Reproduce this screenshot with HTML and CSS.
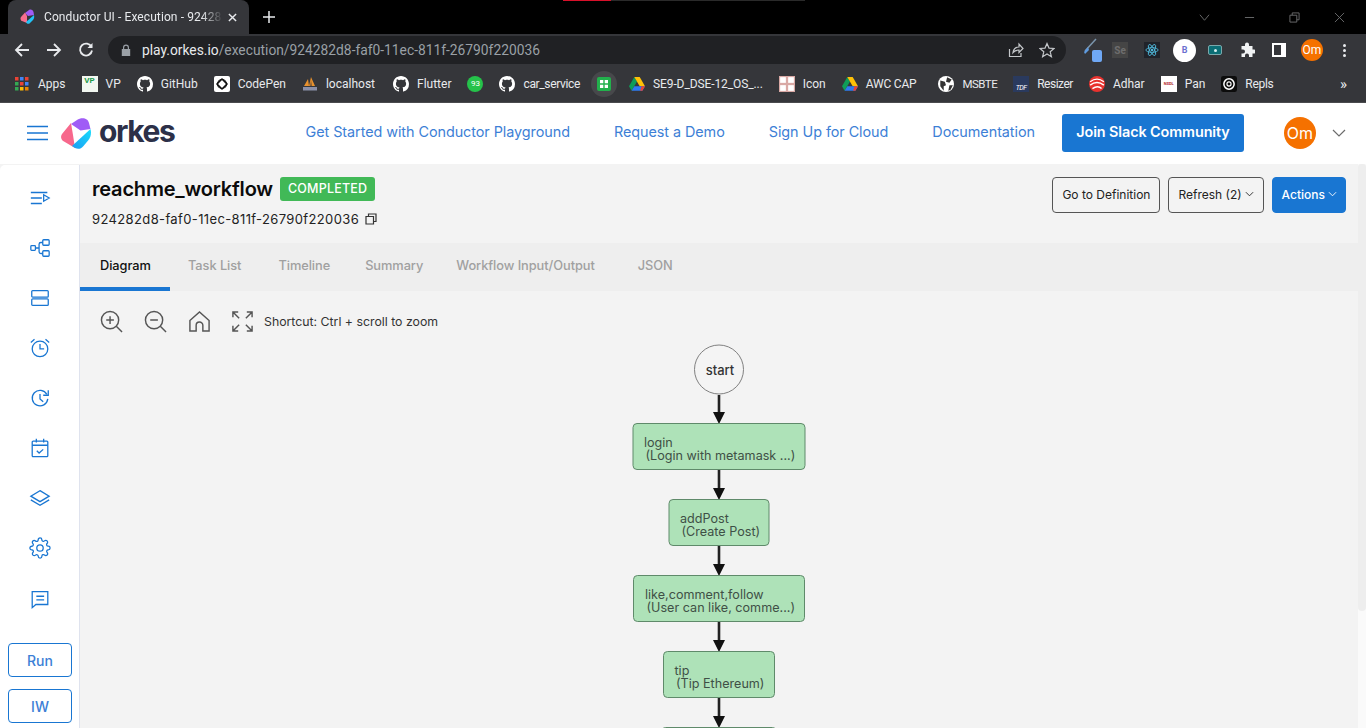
FILE: index.html
```html
<!DOCTYPE html>
<html lang="en">
<head>
	<meta charset="utf-8" />
	<title>Conductor UI - Execution</title>
	<link rel="stylesheet" href="styles.css">
</head>
<body>
	<svg class="sprite" width="0" height="0">
		<symbol id="gh" viewBox="0 0 16 16"><path fill="#fff" d="M8 0C3.58 0 0 3.58 0 8c0 3.54 2.29 6.53 5.47 7.59.4.07.55-.17.55-.38 0-.19-.01-.82-.01-1.49-2.01.37-2.53-.49-2.69-.94-.09-.23-.48-.94-.82-1.13-.28-.15-.68-.52-.01-.53.63-.01 1.08.58 1.23.82.72 1.21 1.87.87 2.33.66.07-.52.28-.87.51-1.07-1.78-.2-3.64-.89-3.64-3.95 0-.87.31-1.59.82-2.15-.08-.2-.36-1.02.08-2.12 0 0 .67-.21 2.2.82.64-.18 1.32-.27 2-.27.68 0 1.36.09 2 .27 1.53-1.04 2.2-.82 2.2-.82.44 1.1.16 1.92.08 2.12.51.56.82 1.27.82 2.15 0 3.07-1.87 3.75-3.65 3.95.29.25.54.73.54 1.48 0 1.07-.01 1.93-.01 2.2 0 .21.15.46.55.38A8.013 8.013 0 0016 8c0-4.42-3.58-8-8-8z"/></symbol>
		<symbol id="drive" viewBox="0 0 16 16"><path fill="#0f9d58" d="M5.3 1 0 10.2l2.6 4.5L8 5.5z"/><path fill="#ffc107" d="M5.3 1h5.4L16 10.2h-5.3z"/><path fill="#2f7bf0" d="M2.6 14.7h10.8l2.6-4.5H5.3z"/><path fill="#ea4335" d="M13.4 14.7 16 10.2h-3.6l-1.2 4.5z"/></symbol>
	</svg>

	<div class="tabstrip">
		<div class="top-glow"></div>
		<div class="tab">
			<svg class="tab-fav" viewBox="0 0 16 16"><path fill="#a25cf5" d="M5 4 9 1c2-1 4 0 4.500 2L14 6 8 7z"/><path fill="#f66e8e" d="M5 3.500 1 8c-1 1.500-.5 3 1 4l5 2V7z"/><path fill="#22c4f7" d="M14 6c.5 2 0 4-1 5l-3 3c-1 1-2 1-3 .5L6 13z"/></svg>
			<span class="tab-title">Conductor UI - Execution - 92428</span>
			<svg class="tab-x" viewBox="0 0 10 10"><path d="M1 1l8 8M9 1l-8 8"/></svg>
		</div>
		<svg class="new-tab" viewBox="0 0 12 12"><path d="M6 0v12M0 6h12"/></svg>
		<div class="win-ctrls">
			<svg class="win-ic" viewBox="0 0 12 12"><path d="M1 3l5 6 5-6"/></svg>
			<svg class="win-ic" viewBox="0 0 12 12"><path d="M1 6h10"/></svg>
			<svg class="win-ic" viewBox="0 0 12 12"><path d="M1 3.500h7.500V11H1zM3.500 3.500V1H11v7.500H8.500"/></svg>
			<svg class="win-ic" viewBox="0 0 12 12"><path d="M1 1l10 10M11 1L1 11"/></svg>
		</div>
	</div>

	<div class="toolbar">
		<svg class="nav-ic" viewBox="0 0 16 16"><path d="M15 8H2M8 2 2 8l6 6"/></svg>
		<svg class="nav-ic" viewBox="0 0 16 16"><path d="M1 8h13M8 2l6 6-6 6"/></svg>
		<svg class="nav-ic" viewBox="0 0 16 16"><path d="M13.500 5A6 6 0 1 0 14 8.500"/><path class="solid" d="M14.500 1v5h-5z"/></svg>
		<div class="omnibox">
			<svg class="lock" viewBox="0 0 10 12"><path d="M2 5V3.500a3 3 0 0 1 6 0V5h1.200v7H.8V5zM3.200 5h3.600V3.500a1.800 1.800 0 0 0-3.600 0z"/></svg>
			<span class="url"><span class="url-host">play.orkes.io</span>/execution/924282d8-faf0-11ec-811f-26790f220036</span>
			<svg class="omni-ic" viewBox="0 0 16 16"><path d="M1.500 7v7.500H13V11M5 10.500C5.500 7 8 5 11 5V2l4 4.500L11 10.500V8C8.500 8 6.500 8.800 5 10.500z"/></svg>
			<svg class="omni-ic" viewBox="0 0 16 16"><path d="M8 1.500l2 4.600 5 .4-3.800 3.300 1.200 4.900L8 12l-4.400 2.700 1.200-4.900L1 6.500l5-.4z"/></svg>
		</div>
		<div class="ext-row">
			<div class="ext ext-pen">
				<svg viewBox="0 0 20 20"><path d="M15 1 4 13" class="pen-a"/><path d="M7 9 3 14l1 2 4-4z" class="pen-b"/></svg>
				<span class="pen-badge"></span>
			</div>
			<span class="ext ext-se">Se</span>
			<div class="ext ext-react">
				<svg viewBox="0 0 16 16"><g fill="none" stroke="#4fb9dc"><ellipse cx="8" cy="8" rx="7" ry="2.700"/><ellipse cx="8" cy="8" rx="7" ry="2.700" transform="rotate(60 8 8)"/><ellipse cx="8" cy="8" rx="7" ry="2.700" transform="rotate(120 8 8)"/></g><circle cx="8" cy="8" r="1.400" fill="#4fb9dc"/></svg>
			</div>
			<span class="ext ext-b">B</span>
			<div class="ext ext-cash"><span></span></div>
			<svg class="ext ext-puzzle" viewBox="0 0 16 16"><path d="M6 2.500a2 2 0 0 1 4 0V4h3.500v3.500H15a2 2 0 0 1 0 4h-1.500V15h-3.500v-1.500a2 2 0 0 0-4 0V15H2.500v-3.500H4a2 2 0 0 0 0-4H2.500V4H6z"/></svg>
			<div class="ext ext-panel"></div>
			<span class="ext ext-om">Om</span>
			<div class="ext ext-dots"><i></i><i></i><i></i></div>
		</div>
	</div>

	<div class="bookmarks">
		<a class="bm bm-apps">
			<svg class="bm-ic" viewBox="0 0 14 14"><rect width="3.500" height="3.500" fill="#ea4335"/><rect x="5" width="3.500" height="3.500" fill="#4285f4"/><rect x="10" width="3.500" height="3.500" fill="#ea4335"/><rect y="5" width="3.500" height="3.500" fill="#34a853"/><rect x="5" y="5" width="3.500" height="3.500" fill="#ea4335"/><rect x="10" y="5" width="3.500" height="3.500" fill="#4285f4"/><rect y="10" width="3.500" height="3.500" fill="#34a853"/><rect x="5" y="10" width="3.500" height="3.500" fill="#fbbc05"/><rect x="10" y="10" width="3.500" height="3.500" fill="#ea8600"/></svg>Apps</a>
		<a class="bm"><span class="bm-ic fav-vp">VP</span>VP</a>
		<a class="bm"><svg class="bm-ic"><use href="#gh"/></svg>GitHub</a>
		<a class="bm"><svg class="bm-ic fav-cp" viewBox="0 0 16 16"><rect width="16" height="16" rx="2" fill="#fff"/><path d="M8 3l5 5-5 5-5-5z" fill="none" stroke="#111" stroke-width="1.500"/><circle cx="8" cy="8" r="4.500" fill="none" stroke="#111" stroke-width="1.200"/></svg>CodePen</a>
		<a class="bm bm-local"><svg class="bm-ic" viewBox="0 0 16 16"><path fill="#e8912d" d="M2 10 6 3l1 7zM7 10l2-9 4 9z"/><path fill="#7a5a3a" d="M8 10l1-6 1 6z"/><rect x="1" y="11" width="14" height="3.500" fill="#8a8fa8"/></svg>localhost</a>
		<a class="bm"><svg class="bm-ic"><use href="#gh"/></svg>Flutter</a>
		<a class="bm"><span class="bm-ic fav-wa">93</span></a>
		<a class="bm bm-car"><svg class="bm-ic"><use href="#gh"/></svg>car_service</a>
		<a class="bm bm-pill"><svg class="pill-ic" viewBox="0 0 14 14"><rect width="14" height="14" rx="2" fill="#22b14c"/><path d="M3 3h3.300v3.300H3zM7.700 3H11v3.300H7.700zM3 7.700h3.300V11H3zM7.700 7.700H11V11H7.700z" fill="#fff"/></svg></a>
		<a class="bm bm-se9"><svg class="bm-ic"><use href="#drive"/></svg>SE9-D_DSE-12_OS_...</a>
		<a class="bm"><svg class="bm-ic" viewBox="0 0 14 14"><rect width="14" height="14" fill="#d9a9a5"/><rect x="1" y="1" width="5" height="5" fill="#fff"/><rect x="8" y="1" width="5" height="5" fill="#fff"/><rect x="1" y="8" width="5" height="5" fill="#fff"/><rect x="8" y="8" width="5" height="5" fill="#fff"/></svg>Icon</a>
		<a class="bm bm-awc"><svg class="bm-ic"><use href="#drive"/></svg>AWC CAP</a>
		<a class="bm bm-msbte"><svg class="bm-ic" viewBox="0 0 14 14"><circle cx="7" cy="7" r="7" fill="#fff"/><path d="M2 4l4 1 1 3-2 1v4L2 9zM8 1l4 2-2 3-3-1zM10 8h3l-2 4-2 1z" fill="#333"/></svg>MSBTE</a>
		<a class="bm bm-resizer"><span class="bm-ic fav-tdf">TDF</span>Resizer</a>
		<a class="bm bm-adhar"><svg class="bm-ic" viewBox="0 0 14 14"><circle cx="7" cy="7" r="7" fill="#e8322e"/><path d="M1 5c4-3 8-3 12 0M1 8c4-3 8-3 12 0M3 11c3-2 6-2 8 0" fill="none" stroke="#fff" stroke-width="1.200"/></svg>Adhar</a>
		<a class="bm"><span class="bm-ic fav-nsdl">NSDL</span>Pan</a>
		<a class="bm bm-repls"><svg class="bm-ic" viewBox="0 0 14 14"><rect width="14" height="14" rx="2" fill="#0c0c0c"/><circle cx="7" cy="7" r="4.500" fill="none" stroke="#fff" stroke-width="1.300"/><circle cx="7" cy="7" r="1.800" fill="none" stroke="#fff"/></svg>Repls</a>
		<span class="bm-more">»</span>
	</div>

	<header class="site-head">
		<svg class="burger" viewBox="0 0 21 16"><path d="M0 1.500h21M0 8h21M0 14.500h21"/></svg>
		<div class="brand">
			<svg class="brand-mark" viewBox="0 0 30 31">
				<defs><linearGradient id="cy" x1="0" y1="1" x2="1" y2="0"><stop offset="0" stop-color="#1c9cf2"/><stop offset="1" stop-color="#18dcfc"/></linearGradient></defs>
				<path fill="#f7688c" d="M10 5 1 16c-1.800 2.500-1 6 2 7.500L14 30l-2-13z"/>
				<path fill="#a05cf6" d="M10 6 16 2c4-3 11-2.500 12 3l1.500 6-10 1.500z"/>
				<path fill="url(#cy)" d="M29.500 11c1 4 .5 8-2 11l-5 6c-2.500 3-5.500 3.500-8.500 2l-3-2z"/>
			</svg>
			<span class="brand-name">orkes</span>
		</div>
		<nav class="head-nav">
			<a>Get Started with Conductor Playground</a>
			<a>Request a Demo</a>
			<a>Sign Up for Cloud</a>
			<a>Documentation</a>
		</nav>
		<a class="slack-btn">Join Slack Community</a>
		<span class="user-om">Om</span>
		<svg class="user-chev" viewBox="0 0 14 8"><path d="M1 1l6 6 6-6"/></svg>
	</header>

	<div class="app">
		<aside class="sidebar">
			<svg class="side-ic" viewBox="0 0 24 24"><path d="M2 6h18M2 12h12M2 18h12M16 8.500l6 3.500-6 3.500z"/></svg>
			<svg class="side-ic" viewBox="0 0 24 24"><rect x="2" y="9.500" width="5" height="5" rx=".8"/><rect x="15" y="3" width="7" height="6" rx="1"/><rect x="15" y="15" width="7" height="6" rx="1"/><path d="M7 12h4M15 6h-2a2 2 0 0 0-2 2v8a2 2 0 0 0 2 2h2"/></svg>
			<svg class="side-ic" viewBox="0 0 24 24"><rect x="3" y="4" width="18" height="7" rx="1"/><rect x="3" y="13" width="18" height="7" rx="1"/></svg>
			<svg class="side-ic" viewBox="0 0 24 24"><circle cx="12" cy="13" r="8.500"/><path d="M12 7.500V13h4.500M2 6l4-3.500M22 6l-4-3.500"/></svg>
			<svg class="side-ic" viewBox="0 0 24 24"><path d="M19.500 8A8.500 8.500 0 1 0 20.500 13"/><path d="M21 3.500V9h-5.500M12 7.500V13l3.500 3"/></svg>
			<svg class="side-ic" viewBox="0 0 24 24"><rect x="3.500" y="4.500" width="17" height="17" rx="1"/><path d="M3.500 9h17M8 2v4M16 2v4M8.500 15l2.500 2.500 4.500-4"/></svg>
			<svg class="side-ic" viewBox="0 0 24 24"><path d="M12 4 22 10l-10 6L2 10zM2 14l10 6 10-6"/></svg>
			<svg class="side-ic" viewBox="0 0 24 24"><circle cx="12" cy="12" r="3.500"/><path d="M19.400 15a1.650 1.650 0 0 0 .33 1.820l.06.06a2 2 0 0 1 0 2.830 2 2 0 0 1-2.830 0l-.06-.06a1.650 1.650 0 0 0-1.820-.33 1.650 1.650 0 0 0-1 1.510V21a2 2 0 0 1-2 2 2 2 0 0 1-2-2v-.09A1.650 1.650 0 0 0 9 19.400a1.650 1.650 0 0 0-1.820.33l-.06.06a2 2 0 0 1-2.830 0 2 2 0 0 1 0-2.830l.06-.06a1.650 1.650 0 0 0 .33-1.820 1.650 1.650 0 0 0-1.510-1H3a2 2 0 0 1-2-2 2 2 0 0 1 2-2h.09A1.650 1.650 0 0 0 4.600 9a1.650 1.650 0 0 0-.33-1.820l-.06-.06a2 2 0 0 1 0-2.830 2 2 0 0 1 2.830 0l.06.06a1.650 1.650 0 0 0 1.820.33H9a1.650 1.650 0 0 0 1-1.510V3a2 2 0 0 1 2-2 2 2 0 0 1 2 2v.09a1.650 1.650 0 0 0 1 1.510 1.650 1.650 0 0 0 1.820-.33l.06-.06a2 2 0 0 1 2.830 0 2 2 0 0 1 0 2.830l-.06.06a1.650 1.650 0 0 0-.33 1.820V9a1.650 1.650 0 0 0 1.510 1H21a2 2 0 0 1 2 2 2 2 0 0 1-2 2h-.09a1.650 1.650 0 0 0-1.510 1z"/></svg>
			<svg class="side-ic side-ic-msg" viewBox="0 0 24 24"><path d="M3.500 4h17v14H7.500l-4 3.500zM8 9h8.500M8 13h8.500"/></svg>
			<a class="side-btn side-btn-first">Run</a>
			<a class="side-btn">IW</a>
		</aside>

		<main class="panel">
			<div class="exec-head">
				<div class="exec-info">
					<div class="exec-title">
						<h1>reachme_workflow</h1>
						<span class="badge">COMPLETED</span>
					</div>
					<div class="exec-id">
						<span>924282d8-faf0-11ec-811f-26790f220036</span>
						<svg class="copy-ic" viewBox="0 0 12 12"><path d="M1 3.500h7.500V11H1zM3.500 3.500V1H11v7.500H8.500"/></svg>
					</div>
				</div>
				<div class="exec-actions">
					<a class="btn">Go to Definition</a>
					<a class="btn">Refresh (2)<svg class="caret" viewBox="0 0 10 6"><path d="M1 1l4 4 4-4"/></svg></a>
					<a class="btn btn-blue">Actions<svg class="caret" viewBox="0 0 10 6"><path d="M1 1l4 4 4-4"/></svg></a>
				</div>
			</div>

			<div class="tabs">
				<a class="tab-link tab-active">Diagram</a>
				<a class="tab-link tab-task">Task List</a>
				<a class="tab-link">Timeline</a>
				<a class="tab-link tab-summary">Summary</a>
				<a class="tab-link tab-wf">Workflow Input/Output</a>
				<a class="tab-link tab-json">JSON</a>
			</div>

			<div class="diagram">
				<div class="zoom-bar">
					<svg class="zoom-ic" viewBox="0 0 24 24"><circle cx="10.500" cy="10.500" r="9"/><path d="M17 17l6 6M10.500 6.500v8M6.500 10.500h8"/></svg>
					<svg class="zoom-ic" viewBox="0 0 24 24"><circle cx="10.500" cy="10.500" r="9"/><path d="M17 17l6 6M6.500 10.500h8"/></svg>
					<svg class="zoom-ic" viewBox="0 0 24 24"><path d="M2 11 12 2l10 9v11h-6.500v-6a3.500 3.500 0 0 0-7 0v6H2z"/></svg>
					<svg class="zoom-ic" viewBox="0 0 24 24"><path d="M8.500 8.500 2 2M2 7.500V2h5.500M15.500 8.500 22 2M16.500 2H22v5.500M8.500 15.500 2 22M2 16.500V22h5.500M15.500 15.500 22 22M22 16.500V22h-5.500"/></svg>
					<span class="zoom-hint">Shortcut: Ctrl + scroll to zoom</span>
				</div>
				<svg class="graph" viewBox="80 340 1278 388" width="1278" height="388">
					<g class="edge">
						<path d="M719 395v18M719 470v19M719 546v19M719 622v19M719 698v19"/>
					</g>
					<g class="head">
						<path d="M713 412h12l-6 12zM713 488h12l-6 12zM713 564h12l-6 12zM713 640h12l-6 12zM713 716h12l-6 12z"/>
					</g>
					<circle class="node-start" cx="719" cy="369.500" r="24.500"/>
					<text class="node-start-t" x="720" y="375">start</text>
					<rect class="node" x="633" y="423.500" width="172" height="46" rx="4"/>
					<text class="node-t" x="644" y="447">login</text>
					<text class="node-t" x="645.500" y="460">(Login with metamask ...)</text>
					<rect class="node" x="669" y="499.500" width="100" height="46" rx="4"/>
					<text class="node-t" x="680" y="523">addPost</text>
					<text class="node-t" x="681.500" y="536">(Create Post)</text>
					<rect class="node" x="633.500" y="575.500" width="171" height="46" rx="4"/>
					<text class="node-t" x="645" y="599">like,comment,follow</text>
					<text class="node-t" x="646.500" y="612">(User can like, comme...)</text>
					<rect class="node" x="663.500" y="651.500" width="111" height="46" rx="4"/>
					<text class="node-t" x="674.500" y="675">tip</text>
					<text class="node-t" x="676" y="688">(Tip Ethereum)</text>
					<rect class="node" x="661.500" y="727.500" width="115" height="46" rx="4"/>
				</svg>
			</div>
			<div class="scroll-thumb"></div>
		</main>
	</div>
</body>
</html>
```
FILE: styles.css
```css
* {
	box-sizing: border-box;
}
html, body {
	margin: 0;
	height: 728px;
	overflow: hidden;
}
body {
	background: #f3f3f3;
	font-family: 'Inter', sans-serif;
	color: #111;
}
a {
	text-decoration: none;
}
.sprite {
	display: block;
}

/* browser chrome */
.tabstrip {
	position: relative;
	display: flex;
	align-items: flex-end;
	height: 34px;
	padding-left: 8px;
	background: #000;
}
.top-glow {
	position: absolute;
	top: 0;
	left: 563px;
	width: 242px;
	height: 1px;
	background: linear-gradient(90deg, #d8102a 48px, #2a2a2a 48px);
}
.tab {
	display: flex;
	align-items: center;
	width: 241px;
	height: 34px;
	padding: 0 12px 0 12px;
	background: #35363a;
	border-radius: 8px 8px 0 0;
	font: 12px 'Roboto', sans-serif;
	color: #e8eaed;
}
.tab-fav {
	flex: none;
	width: 16px;
	height: 16px;
	margin-right: 8px;
}
.tab-title {
	flex: 1;
	white-space: nowrap;
	-webkit-mask-image: linear-gradient(90deg, #000 88%, transparent);
	mask-image: linear-gradient(90deg, #000 88%, transparent);
	letter-spacing: .1px;
}
.tab-x {
	flex: none;
	width: 9px;
	height: 9px;
	margin-left: 5px;
	fill: none;
	stroke: #e8eaed;
	stroke-width: 1.6;
}
.new-tab {
	align-self: center;
	width: 12px;
	height: 12px;
	margin-left: 14px;
	fill: none;
	stroke: #e8eaed;
	stroke-width: 1.5;
}
.win-ctrls {
	display: flex;
	gap: 34px;
	align-items: center;
	align-self: center;
	margin-left: auto;
	padding-right: 21px;
}
.win-ic {
	width: 11px;
	height: 11px;
	fill: none;
	stroke: #6d6e70;
	stroke-width: 1;
}

.toolbar {
	display: flex;
	align-items: center;
	height: 32px;
	padding-left: 14px;
	background: #35363a;
}
.nav-ic {
	flex: none;
	width: 16px;
	height: 16px;
	margin-right: 16px;
	fill: none;
	stroke: #e8eaed;
	stroke-width: 1.8;
}
.nav-ic .solid {
	fill: #e8eaed;
	stroke: none;
}
.omnibox {
	display: flex;
	align-items: center;
	flex: none;
	width: 958px;
	height: 28px;
	margin-left: -2px;
	padding: 0 11px 0 13px;
	background: #202124;
	border-radius: 14px;
	font: 13.800px 'Roboto', sans-serif;
	color: #9aa0a6;
}
.lock {
	flex: none;
	width: 10px;
	height: 12px;
	margin-right: 11px;
	fill: #9aa0a6;
}
.url {
	flex: 1;
	white-space: nowrap;
}
.url-host {
	color: #e8eaed;
}
.omni-ic {
	flex: none;
	width: 16px;
	height: 16px;
	margin-left: 15px;
	fill: none;
	stroke: #c4c7ca;
	stroke-width: 1.2;
}
.ext-row {
	display: flex;
	align-items: center;
	flex: 1;
	height: 32px;
	padding-left: 15px;
	font: 12px 'Roboto', sans-serif;
}
.ext {
	display: flex;
	align-items: center;
	justify-content: center;
	flex: none;
}
.ext-pen {
	position: relative;
	width: 20px;
	height: 24px;
	margin-right: 11px;
}
.ext-pen svg {
	width: 20px;
	height: 20px;
	margin-top: -4px;
	fill: none;
}
.pen-a {
	stroke: #7b96ad;
	stroke-width: 1.5;
}
.pen-b {
	fill: #5f9be0;
}
.pen-badge {
	position: absolute;
	right: -1px;
	bottom: 0;
	width: 10px;
	height: 12px;
	background: #6fa8f5;
	border-radius: 2px;
}
.ext-se {
	width: 16px;
	height: 16px;
	margin-right: 16px;
	background: #454545;
	font-size: 10px;
	font-weight: 700;
	color: #6e6e6e;
}
.ext-react {
	width: 16px;
	height: 16px;
	margin-right: 13px;
	background: #20232a;
}
.ext-react svg {
	width: 14px;
	height: 14px;
}
.ext-b {
	width: 23px;
	height: 23px;
	margin-right: 12px;
	background: #fff;
	border-radius: 50%;
	font-size: 9px;
	font-weight: 700;
	color: #6a6fd0;
}
.ext-cash {
	width: 14px;
	height: 10px;
	margin-right: 17px;
	background: #0b6e75;
	border: 1px solid #7aa8ab;
	border-radius: 2px;
}
.ext-cash span {
	width: 3px;
	height: 3px;
	background: #d8f0f0;
	border-radius: 50%;
}
.ext-puzzle {
	width: 16px;
	height: 16px;
	margin-right: 17px;
	fill: #f1f3f4;
}
.ext-panel {
	width: 14px;
	height: 14px;
	margin-right: 15px;
	background: #35363a;
	border: 2px solid #fff;
	border-right-width: 5px;
}
.ext-om {
	width: 22px;
	height: 22px;
	margin-right: 20px;
	background: #f57100;
	border-radius: 50%;
	font-size: 12px;
	color: #fff;
}
.ext-dots {
	flex-direction: column;
	gap: 2px;
}
.ext-dots i {
	width: 3px;
	height: 3px;
	background: #e8eaed;
	border-radius: 50%;
}

.bookmarks {
	display: flex;
	align-items: center;
	height: 37px;
	padding: 0 0 1px 15px;
	background: #35363a;
	border-bottom: 1px solid #4a4b4e;
	font: 12px 'Roboto', sans-serif;
	color: #e8eaed;
}
.bm {
	display: flex;
	align-items: center;
	gap: 8px;
	margin-right: 16px;
	white-space: nowrap;
}
.bm-ic {
	flex: none;
	display: flex;
	align-items: center;
	justify-content: center;
	width: 16px;
	height: 16px;
}
.bm-apps {
	gap: 9px;
}
.bm-apps .bm-ic {
	width: 14px;
	height: 14px;
}
.bm-local {
	margin-right: 18px;
}
.bm-car {
	margin-right: 11px;
	letter-spacing: -.35px;
}
.bm-se9 {
	letter-spacing: -.1px;
}
.bm-awc {
	margin-right: 22px;
	letter-spacing: -.2px;
}
.bm-msbte {
	font-size: 11.500px;
	letter-spacing: -.5px;
}
.bm-resizer {
	letter-spacing: -.5px;
}
.bm-repls {
	letter-spacing: -.3px;
}
.fav-vp {
	background: #f2f7f0;
	font-size: 8px;
	font-weight: 700;
	color: #1e9b4a;
	align-items: flex-start;
}
.fav-wa {
	background: #25c24a;
	border-radius: 50%;
	font-size: 8px;
	color: #fff;
}
.fav-tdf {
	background: #2a3a5e;
	font-size: 7px;
	font-style: italic;
	color: #fff;
	align-items: flex-end;
}
.fav-nsdl {
	background: #fff;
	font-size: 4px;
	font-weight: 700;
	color: #b3262a;
}
.bm-pill {
	width: 26px;
	height: 26px;
	margin-right: 12px;
	justify-content: center;
	background: #47484b;
	border-radius: 50%;
}
.pill-ic {
	width: 14px;
	height: 14px;
}
.bm-more {
	margin-left: auto;
	margin-right: 19px;
	font-size: 15px;
	color: #e8eaed;
}

/* site header */
.site-head {
	display: flex;
	align-items: center;
	height: 61px;
	padding: 0 0 1px 27px;
	background: #fff;
}
.burger {
	flex: none;
	width: 21px;
	height: 16px;
	fill: none;
	stroke: #1976d2;
	stroke-width: 1.6;
}
.brand {
	display: flex;
	align-items: center;
	gap: 8px;
	margin-left: 13px;
}
.brand-mark {
	width: 30px;
	height: 31px;
}
.brand-name {
	margin-bottom: 4px;
	font: 700 30px/1 'Inter', sans-serif;
	letter-spacing: -1.4px;
	color: #2c3048;
}
.head-nav {
	display: flex;
	gap: 44px;
	margin-left: 131px;
	margin-bottom: 4px;
	font-size: 14.400px;
	letter-spacing: -.06px;
	color: #3d7fd6;
}
.slack-btn {
	display: flex;
	align-items: center;
	justify-content: center;
	flex: none;
	width: 182px;
	height: 38px;
	margin-left: 27px;
	padding-bottom: 3px;
	background: #1976d2;
	border-radius: 3px;
	font-size: 14.400px;
	font-weight: 600;
	letter-spacing: -.1px;
	color: #fff;
}
.user-om {
	display: flex;
	align-items: center;
	justify-content: center;
	flex: none;
	width: 32px;
	height: 32px;
	margin-left: 40px;
	background: #f57100;
	border-radius: 50%;
	font-size: 16px;
	color: #fff;
}
.user-chev {
	width: 14px;
	height: 8px;
	margin-left: 16px;
	fill: none;
	stroke: #6c6c6c;
	stroke-width: 1.2;
}

/* app body */
.app {
	display: flex;
	height: 564px;
}
.sidebar {
	flex: none;
	display: flex;
	flex-direction: column;
	align-items: center;
	width: 80px;
	margin-top: 1px;
	padding: 9px 0 0 1px;
	background: #fff;
	border-right: 1px solid #dfe3ee;
	border-radius: 5px 0 0 0;
}
.side-ic {
	flex: none;
	width: 22px;
	height: 22px;
	margin: 13px 0 15px;
	fill: none;
	stroke: #1976d2;
	stroke-width: 1.4;
}
.side-ic-msg {
	margin: 14px 0 14px;
}
.side-btn {
	flex: none;
	display: flex;
	align-items: center;
	justify-content: center;
	width: 64px;
	height: 34px;
	margin-bottom: 12px;
	border: 1px solid #1976d2;
	border-radius: 4px;
	font-size: 14px;
	font-weight: 500;
	color: #3d7fd6;
}
.side-btn-first {
	margin-top: 19px;
}
.panel {
	position: relative;
	flex: 1;
	min-width: 0;
	padding-right: 8px;
	background: #fafafa;
}
.exec-head {
	display: flex;
	justify-content: space-between;
	height: 79px;
	padding: 13px 12px 0 12px;
	background: #f3f3f3;
}
.exec-title {
	display: flex;
	align-items: center;
	gap: 7px;
}
.exec-title h1 {
	margin: 0;
	font-size: 20px;
	font-weight: 600;
	letter-spacing: -.2px;
	color: #0b0b0b;
}
.badge {
	padding: 0 8px;
	height: 24px;
	line-height: 24px;
	background: #41b957;
	border-radius: 3px;
	font-size: 12.500px;
	font-weight: 500;
	letter-spacing: .2px;
	color: #fff;
}
.exec-id {
	display: flex;
	align-items: center;
	gap: 6px;
	margin-top: 10px;
	font-size: 13px;
	letter-spacing: .37px;
	color: #222;
}
.copy-ic {
	width: 12px;
	height: 12px;
	fill: none;
	stroke: #333;
	stroke-width: 1.2;
}
.exec-actions {
	display: flex;
	gap: 8px;
	align-items: flex-start;
}
.btn {
	display: flex;
	align-items: center;
	height: 36px;
	padding: 0 9px 2px;
	border: 1px solid #555;
	border-radius: 4px;
	font-size: 12px;
	color: #222;
}
.btn-blue {
	padding: 0 8px 2px 9px;
	background: #1976d2;
	border-color: #1976d2;
	color: #fff;
	font-weight: 500;
}
.caret {
	width: 9px;
	height: 6px;
	margin-left: 3px;
	fill: none;
	stroke: currentColor;
	stroke-width: 1;
}
.tabs {
	display: flex;
	height: 48px;
	margin-right: -8px;
	background: #eee;
	font-size: 12.800px;
	font-weight: 500;
	letter-spacing: -.05px;
	color: #a0a0a0;
}
.tab-link {
	display: flex;
	align-items: center;
	padding: 0 18px 3px;
	margin-left: 1px;
}
.tab-active {
	width: 90px;
	margin: 0;
	padding: 0 20px;
	border-bottom: 4px solid #1976d2;
	color: #111;
}
.tab-task {
	margin-left: 0;
}
.tab-summary {
	margin-left: -1px;
}
.tab-wf {
	margin-left: -3px;
}
.tab-json {
	margin-left: 7px;
}
.diagram {
	height: 437px;
	background: #f3f3f3;
}
.zoom-bar {
	display: flex;
	align-items: center;
	height: 49px;
	padding: 11px 0 0 20px;
}
.zoom-ic {
	flex: none;
	width: 23px;
	height: 23px;
	margin-right: 21px;
	fill: none;
	stroke: #555;
	stroke-width: 1.5;
}
.zoom-ic:nth-of-type(3) {
	margin-right: 20px;
}
.zoom-ic:nth-of-type(4) {
	margin-right: 10px;
}
.zoom-hint {
	font-size: 12.300px;
	color: #333;
}
.graph {
	display: block;
	overflow: hidden;
}
.edge {
	fill: none;
	stroke: #222;
	stroke-width: 2.600;
}
.head {
	fill: #111;
}
.node-start {
	fill: #f4f4f4;
	stroke: #808080;
}
.node-start-t {
	font: 500 13px 'Inter', sans-serif;
	text-anchor: middle;
	fill: #333;
}
.node {
	fill: #aee2b8;
	stroke: #5f8a6a;
}
.node-t {
	font: 12.600px 'Inter', sans-serif;
	fill: #3f5046;
}
.scroll-thumb {
	position: absolute;
	top: 0;
	right: 0;
	width: 8px;
	height: 447px;
	background: #eee;
	border-radius: 3px 3px 4px 4px;
}
```
